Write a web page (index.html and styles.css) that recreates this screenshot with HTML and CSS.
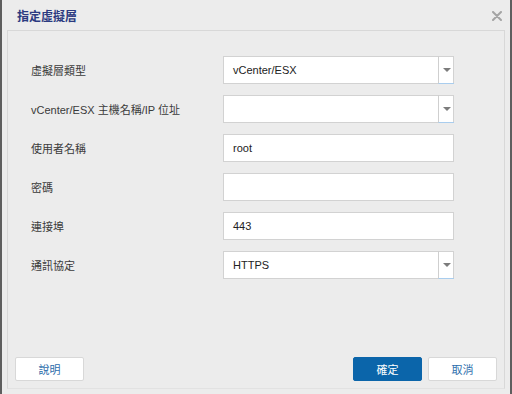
FILE: index.html
```html
<!DOCTYPE html>
<html lang="zh-Hant">
<head>
  <meta charset="UTF-8" />
  <title>指定虛擬層</title>
  <link rel="stylesheet" href="styles.css">
</head>
<body>
  <div class="dialog">
    <div class="dialog-head">
      <span class="title">指定虛擬層</span>
      <svg class="close" width="10" height="10" viewBox="0 0 10 10">
        <path d="M1 1 L9 9 M9 1 L1 9" stroke="#a4a4a4" stroke-width="2" stroke-linecap="round"/>
      </svg>
    </div>

    <div class="panel">
      <!-- 表單欄位 -->
      <div class="form">
        <div class="row">
          <label>虛擬層類型</label>
          <div class="field select">
            <span class="value">vCenter/ESX</span>
            <span class="arrow"><i></i></span>
          </div>
        </div>
        <div class="row">
          <label>vCenter/ESX 主機名稱/IP 位址</label>
          <div class="field select">
            <span class="value"></span>
            <span class="arrow"><i></i></span>
          </div>
        </div>
        <div class="row">
          <label>使用者名稱</label>
          <div class="field"><span class="value">root</span></div>
        </div>
        <div class="row">
          <label>密碼</label>
          <div class="field"><span class="value"></span></div>
        </div>
        <div class="row">
          <label>連接埠</label>
          <div class="field"><span class="value">443</span></div>
        </div>
        <div class="row">
          <label>通訊協定</label>
          <div class="field select">
            <span class="value">HTTPS</span>
            <span class="arrow"><i></i></span>
          </div>
        </div>
      </div>

      <div class="buttons">
        <button class="btn">說明</button>
        <div class="right">
          <button class="btn primary">確定</button>
          <button class="btn">取消</button>
        </div>
      </div>
    </div>
  </div>
</body>
</html>
```

FILE: styles.css
```css
html, body {
  margin: 0;
  padding: 0;
  height: 100%;
}
body {
  background: #5e5e5e;
  font-family: "Liberation Sans", "Noto Sans CJK TC", sans-serif;
  font-size: 11px;
  color: #333;
}
.dialog {
  box-sizing: border-box;
  height: 394px;
  margin: 0 2px;
  padding-top: 1px;
  background: #ececec;
  display: flex;
  flex-direction: column;
}
.dialog-head {
  height: 29px;
  display: flex;
  align-items: center;
  justify-content: space-between;
  padding: 0 8px 0 15px;
}
.title {
  font-weight: bold;
  font-size: 12px;
  color: #2b3a80;
}
.close {
  display: block;
  margin-top: 1px;
}
.panel {
  flex: 1;
  margin: 0 5px 5px 5px;
  border: 1px solid #d8d8d8;
  border-bottom-color: #e2e2e2;
  display: flex;
  flex-direction: column;
  justify-content: space-between;
  padding: 25px 7px 7px 7px;
}
.form {
  display: flex;
  flex-direction: column;
  gap: 11px;
  padding-left: 16px;
}
.row {
  display: flex;
  align-items: center;
  height: 28px;
}
.row label {
  width: 192px;
  color: #3a3a3a;
}
.field {
  box-sizing: border-box;
  width: 231px;
  height: 28px;
  background: white;
  border: 1px solid #d2d2d2;
  display: flex;
  align-items: center;
}
.value {
  flex: 1;
  padding-left: 9px;
  color: #222;
}
.arrow {
  box-sizing: border-box;
  width: 16px;
  height: 28px;
  margin: -1px -1px -1px 0;
  border-left: 1px solid #cfcfcf;
  border-bottom: 1px solid #a9cdee;
  display: flex;
  align-items: center;
  justify-content: center;
}
.arrow i {
  width: 0;
  height: 0;
  border-left: 4px solid transparent;
  border-right: 4px solid transparent;
  border-top: 4px solid #7c7c7c;
}
.buttons {
  display: flex;
  justify-content: space-between;
}
.right {
  display: flex;
  gap: 6px;
}
.btn {
  width: 69px;
  height: 24px;
  background: white;
  border: 1px solid #d8d8d8;
  border-radius: 2px;
  color: #2d6eac;
  font-family: "Liberation Sans", "Noto Sans CJK TC", sans-serif;
  font-size: 11px;
  padding: 0;
  cursor: pointer;
}
.btn.primary {
  background: #0b65aa;
  border-color: #0b65aa;
  color: white;
}
```
